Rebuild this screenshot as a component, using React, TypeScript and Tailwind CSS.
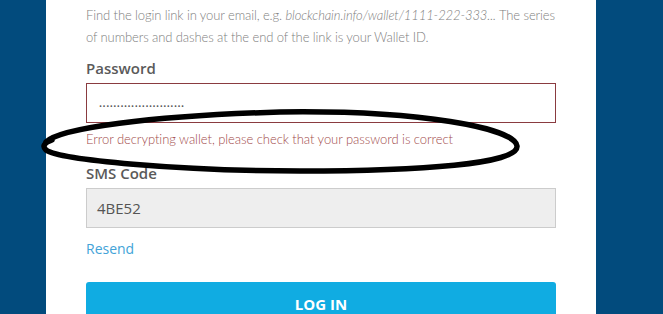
import React from 'react';

const Ellipse: React.FC = () => (
  <svg
    className="absolute left-0 top-0 pointer-events-none"
    width="663"
    height="314"
    viewBox="0 0 663 314"
    fill="none"
  >
    <path
      d="M46 142 C 60 128, 150 116, 280 112 C 420 110, 515 128, 517 146 C 519 164, 420 171, 300 171 C 180 171, 60 160, 46 150 C 42 146, 44 143, 52 140"
      stroke="#000"
      strokeWidth="5.5"
      strokeLinecap="round"
    />
  </svg>
);

export default function App() {
  return (
    <div className="relative w-[663px] h-[314px] overflow-hidden bg-[#024b7d]">
      <div className="ml-[46px] w-[550px] h-full bg-white px-10 pt-1">
        <p className="font-['Lato'] font-light text-[13px] tracking-[-0.1px] leading-[22px] text-[#808080] whitespace-nowrap">
          Find the login link in your email, e.g. <i>blockchain.info/wallet/1111-222-333...</i> The series
          <br />
          of numbers and dashes at the end of the link is your Wallet ID.
        </p>

        <label className="block mt-[10px] font-['Open_Sans'] font-semibold text-[15px] leading-[20px] text-[#5a5a5a]">
          Password
        </label>
        <div className="mt-[5px] h-[40px] border border-[#8a3b40] flex items-center px-[12px]">
          <span className="font-['Lato'] text-[13px] text-[#555] tracking-[0.5px]">........................</span>
        </div>
        <p className="mt-[7px] font-['Lato'] font-light text-[13px] tracking-[-0.05px] leading-[18px] text-[#a24b4b]">
          Error decrypting wallet, please check that your password is correct
        </p>

        <label className="block mt-[15px] font-['Open_Sans'] font-semibold text-[15px] leading-[20px] text-[#5a5a5a]">
          SMS Code
        </label>
        <div className="mt-[5px] h-[40px] border border-[#cccccc] bg-[#eeeeee] flex items-center px-[10px]">
          <span className="font-['Open_Sans'] text-[15px] text-[#555]">4BE52</span>
        </div>

        <a className="block mt-[11px] font-['Open_Sans'] text-[14px] leading-[20px] text-[#43a3d8]">Resend</a>

        <button className="mt-[23px] w-full h-[44px] rounded-[3px] bg-[#10ace2] text-white font-['Open_Sans'] font-bold text-[15px]">
          LOG IN
        </button>
      </div>
      <Ellipse />
    </div>
  );
}
